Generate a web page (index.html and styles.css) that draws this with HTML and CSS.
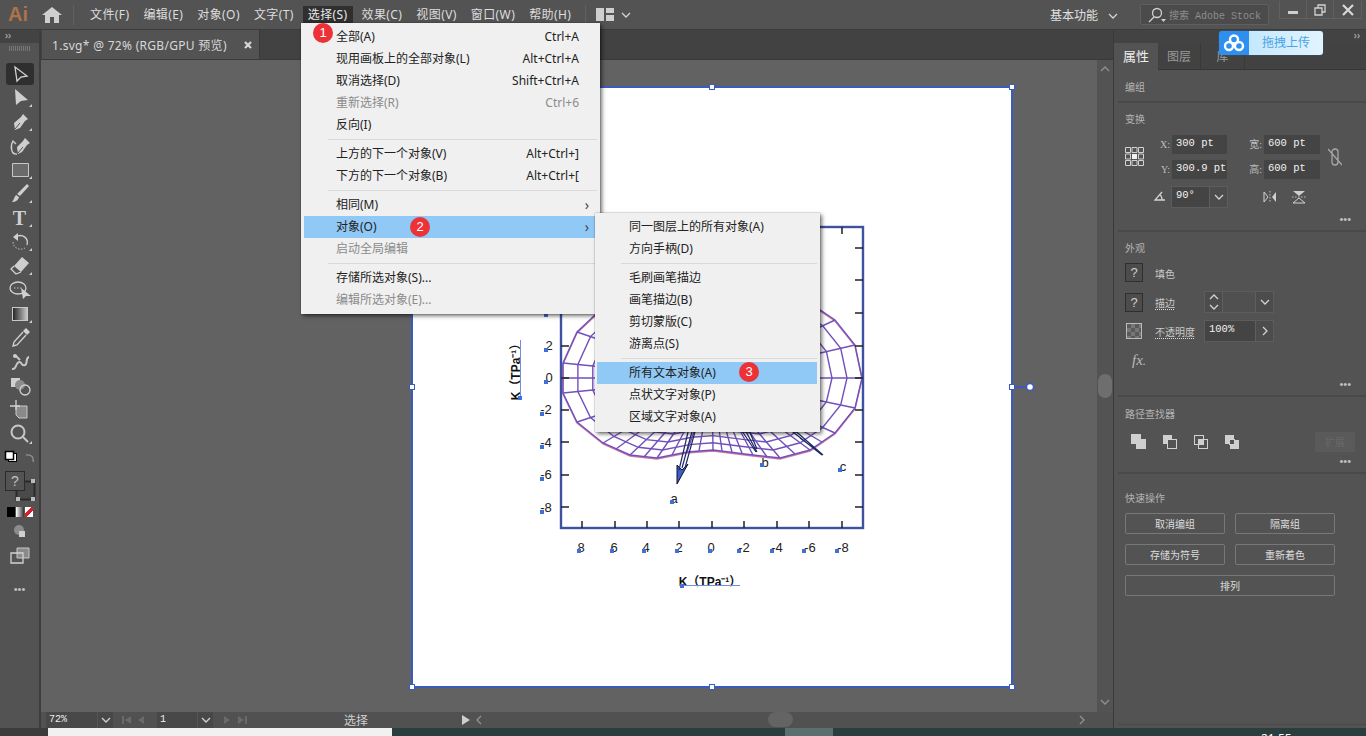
FILE: index.html
```html
<!DOCTYPE html>
<html lang="zh-CN">
<head>
    <meta charset="UTF-8">
    <title>1.svg @ 72% (RGB/GPU 预览)</title>
    <link rel="stylesheet" href="styles.css">
</head>
<body>
<div class="app">
    <!-- top menu bar -->
    <header class="menubar">
        <span class="logo">Ai</span>
        <svg class="home" width="20" height="16" viewBox="0 0 20 16"><path class="fill-light" d="M10 0 L20 8 L17 8 L17 16 L12 16 L12 10 L8 10 L8 16 L3 16 L3 8 L0 8 Z"/></svg>
        <span class="bar-sep"></span>
        <nav class="menu-items">
            <span class="menu-item">文件(F)</span>
            <span class="menu-item">编辑(E)</span>
            <span class="menu-item">对象(O)</span>
            <span class="menu-item">文字(T)</span>
            <span class="menu-item active">选择(S)</span>
            <span class="menu-item">效果(C)</span>
            <span class="menu-item">视图(V)</span>
            <span class="menu-item">窗口(W)</span>
            <span class="menu-item">帮助(H)</span>
        </nav>
        <span class="bar-sep layout-sep"></span>
        <svg class="layout-icon" width="18" height="13" viewBox="0 0 18 13"><path class="fill-light" d="M0 0H8V13H0Z M10 0H18V5H10Z M10 7H18V13H10Z"/></svg>
        <svg class="chev" width="10" height="8" viewBox="0 0 10 8"><path class="line-light" d="M1 2 L5 6 L9 2"/></svg>

        <div class="bar-right">
            <span class="workspace-name">基本功能</span>
            <svg class="chev workspace-chev" width="10" height="8" viewBox="0 0 10 8"><path class="line-light" d="M1 2 L5 6 L9 2"/></svg>
            <div class="search">
                <svg width="18" height="16" viewBox="0 0 18 16"><circle class="line-light" cx="9" cy="6" r="4.5"/><path class="line-light" d="M6 10 L1 15"/><path class="fill-light" d="M13 12H18L15.500 15Z"/></svg>
                <span class="search-text">搜索 Adobe Stock</span>
            </div>
            <div class="win-btns">
                <span class="win-btn"><svg width="12" height="12" viewBox="0 0 12 12"><path class="fill-light" d="M1 7H11V10H1Z"/></svg></span>
                <span class="win-btn"><svg width="12" height="12" viewBox="0 0 12 12"><path class="line-light" d="M1 4H8V11H1Z M4 4V1H11V8H8"/></svg></span>
                <span class="win-btn"><svg width="12" height="12" viewBox="0 0 12 12"><path class="line-bold" d="M1 1 L11 11 M11 1 L1 11"/></svg></span>
            </div>
        </div>
    </header>

    <div class="workspace">
        <!-- left tools -->
        <aside class="toolbar">
            <div class="tool-head">››</div>
            <div class="tool-grip"></div>
            <div class="tool selected"><svg width="24" height="24" viewBox="0 0 24 24"><path class="line-light" d="M7 5 L19 14 L13 15 L9 19 Z"/></svg></div>
            <div class="tool"><svg width="24" height="24" viewBox="0 0 24 24"><path class="fill-light" d="M7 3 L20 14 L13 15 L8 19 Z"/><path class="fill-light" d="M24 18V21H21Z"/></svg></div>
            <div class="tool"><svg width="24" height="24" viewBox="0 0 24 24"><path class="fill-light" d="M7 20 L6 13 L13 7 L15 4 L20 9 L17 11 L12 18 Z"/><path class="slit" d="M7 19 L12 13"/><path class="fill-light" d="M24 18V21H21Z"/></svg></div>
            <div class="tool"><svg width="24" height="24" viewBox="0 0 24 24"><path class="fill-light" d="M10 20 L9 13 L15 7 L17 4 L22 9 L19 11 L14 18 Z"/><path class="slit" d="M10 19 L15 13"/><path class="line-light" d="M9 20 C3 21 2 12 5 7 L8 10"/></svg></div>
            <div class="tool"><svg width="24" height="24" viewBox="0 0 24 24"><path class="box-line" d="M4.500 5.500H20.500V18.500H4.500Z"/><path class="fill-light" d="M24 18V21H21Z"/></svg></div>
            <div class="tool"><svg width="24" height="24" viewBox="0 0 24 24"><path class="fill-light" d="M19 2 L21 4 L12 14 L9 12 Z M8 13 L11 15 C10 19 7 20 4 20 C6 18 6 15 8 13 Z"/><path class="fill-light" d="M24 18V21H21Z"/></svg></div>
            <div class="tool"><span class="tool-t">T</span><svg class="tool-corner" width="24" height="24" viewBox="0 0 24 24"><path class="fill-light" d="M24 18V21H21Z"/></svg></div>
            <div class="tool"><svg width="24" height="24" viewBox="0 0 24 24"><path class="line-light" d="M8 7 C14 3 21 8 19 15"/><path class="fill-light" d="M10 3 V11 L5 7 Z"/><path class="line-dash" d="M5 12 C5 18 12 21 17 18"/><path class="fill-light" d="M24 18V21H21Z"/></svg></div>
            <div class="tool"><svg width="24" height="24" viewBox="0 0 24 24"><path class="fill-light" d="M14 3 L21 9 L13 18 L6 12 Z"/><path class="line-light" d="M6 12 L3 15 L8 20 L13 18"/><path class="fill-light" d="M24 18V21H21Z"/></svg></div>
            <div class="tool"><svg width="24" height="24" viewBox="0 0 24 24"><ellipse class="line-light" cx="10" cy="10" rx="8" ry="6"/><path class="line-dash" d="M6 10H15"/><path class="fill-light" d="M13 10 L23 18 L18 18 L15 21 Z"/></svg></div>
            <div class="tool"><svg width="24" height="24" viewBox="0 0 24 24"><defs><linearGradient id="toolGrad"><stop offset="0" stop-color="#222"/><stop offset="1" stop-color="#ccc"/></linearGradient></defs><rect class="grad-box" x="4.500" y="5.500" width="15" height="13"/><path class="fill-light" d="M24 18V21H21Z"/></svg></div>
            <div class="tool"><svg width="24" height="24" viewBox="0 0 24 24"><path class="fill-light" d="M15 5 L18 2 L22 6 L19 9 Z"/><path class="line-light" d="M15 6 L6 16 L5 20 L9 19 L18 9"/></svg></div>
            <div class="tool"><svg width="24" height="24" viewBox="0 0 24 24"><path class="line-thick" d="M4 19 C9 20 7 13 11 12 C14 11 13 17 17 15 C20 14 17 8 21 7 M8 6 L12 10"/><circle class="fill-light" cx="7" cy="6" r="2"/></svg></div>
            <div class="tool"><svg width="24" height="24" viewBox="0 0 24 24"><rect class="fill-light" x="3" y="4" width="9" height="9"/><circle class="fill-mid" cx="12" cy="11" r="5"/><circle class="line-light" cx="17" cy="16" r="5"/></svg></div>
            <div class="tool"><svg width="24" height="24" viewBox="0 0 24 24"><path class="box-fill" d="M8 8H19V20H11L8 17Z"/><path class="line-light" d="M8 2V12 M2 8H12"/></svg></div>
            <div class="tool"><svg width="24" height="24" viewBox="0 0 24 24"><circle class="line-thick" cx="10" cy="10" r="6.500"/><path class="line-thick" d="M15 15 L20 20"/><path class="fill-light" d="M24 19V22H21Z"/></svg></div>
            <svg class="swatches" width="40" height="60" viewBox="0 0 40 60">
                <rect class="sw-white" x="8.500" y="3.500" width="8" height="8"/>
                <rect class="sw-black" x="5.500" y="1.500" width="8" height="8"/>
                <path class="line-dim" d="M26 5 C32 4 34 8 33 12"/>
                <rect class="sw-stroke" x="16.500" y="31.500" width="18" height="18"/>
                <rect class="sw-dot" x="31" y="29" width="4" height="4"/>
                <rect class="sw-dot" x="31" y="47" width="4" height="4"/>
                <rect class="sw-dot" x="16" y="47" width="4" height="4"/>
                <rect class="sw-box" x="5.500" y="21.500" width="19" height="19"/>
                <text class="sw-q" x="15" y="36">?</text>
            </svg>
            <div class="color-row">
                <span class="chip chip-black"></span>
                <span class="chip chip-grad"></span>
                <span class="chip chip-none"></span>
            </div>
            <div class="tool tool-small"><svg width="16" height="16" viewBox="0 0 16 16"><circle class="fill-mid" cx="7" cy="7" r="5"/><rect class="fill-light" x="7" y="8" width="6" height="6"/></svg></div>
            <div class="tool tool-screen"><svg width="20" height="18" viewBox="0 0 20 18"><path class="box-fill" d="M7 1H19V11H7Z"/><path class="line-light" d="M1 6H13V16H1Z"/></svg></div>
            <div class="dots tool-dots">•••</div>
        </aside>

        <!-- document -->
        <main class="doc">
            <div class="tabs">
                <div class="tab">
                    <span class="tab-name">1.svg* @ 72% (RGB/GPU 预览)</span>
                    <svg width="8" height="8" viewBox="0 0 8 8"><path class="line-bold" d="M1 1 L7 7 M7 1 L1 7"/></svg>
                </div>
            </div>
            <div class="canvas-row">
                <div class="canvas">
                    <div class="artboard">
                        <svg class="chart" width="600" height="600" viewBox="412 87 600 600">
                            <defs>
                                <polygon id="ring" class="ring" points="150,0 143,30 123,55 98,72 68,80 41,77 1,72 -25,74 -55,80 -82,77 -109,65 -135,44 -149,15 -149,-15 -135,-46 -117,-63 -90,-80 -50,-90 0,-95 50,-90 108,-68 123,-58 143,-33"/>
                                <path id="spokes" class="ring" d="M0 0L150 0M0 0L143 30M0 0L123 55M0 0L110 64M0 0L98 72M0 0L83 76M0 0L68 80M0 0L55 79M0 0L41 77M0 0L30 75M0 0L20 74M0 0L10 73M0 0L1 72M0 0L-13 73M0 0L-25 74M0 0L-40 77M0 0L-55 80M0 0L-68 79M0 0L-82 77M0 0L-96 71M0 0L-109 65M0 0L-135 44M0 0L-149 15M0 0L-149 0M0 0L-149 -15M0 0L-135 -46M0 0L-117 -63M0 0L108 -68M0 0L123 -58M0 0L143 -33"/>
                            </defs>
                            <g transform="translate(712 378)" class="mesh">
                                <use href="#ring" class="mesh-pink" y="1"/>
                                <use href="#spokes"/>
                                <use href="#ring"/>
                                <use href="#ring" transform="scale(.9)"/>
                                <use href="#ring" transform="scale(.8)"/>
                                <use href="#ring" transform="scale(.7)"/>
                            </g>

                            <rect class="frame" x="561" y="227" width="302" height="301"/>
                            <path class="ticks" d="M582 227v7M615 227v7M647 227v7M679 227v7M712 227v7M744 227v7M777 227v7M809 227v7M842 227v7
                                M582 528v-7M615 528v-7M647 528v-7M679 528v-7M712 528v-7M744 528v-7M777 528v-7M809 528v-7M842 528v-7
                                M863 248h-8M863 280h-8M863 313h-8M863 346h-8M863 378h-8M863 410h-8M863 442h-8M863 475h-8M863 507h-8
                                M561 346h8M561 378h8M561 410h8M561 442h8M561 475h8M561 507h8"/>

                            <!-- arrows -->
                            <path class="arrow-head" d="M677 484 L677 465 L682 470 L688 464 Z"/>
                            <path class="arrow-shaft" d="M693 428 L682 468 M696 428 L685 468 M689 428 L679 470"/>
                            <path class="arrow-shaft" d="M740 428 L756 452 M744 428 L757 452 M748 428 L757 449"/>
                            <path class="arrow-shaft" d="M788 428 L822 455 M792 428 L823 455 M800 438 L823 455"/>

                            <g class="labels">
                                <text x="581" y="552">8</text><text x="614" y="552">6</text><text x="646" y="552">4</text>
                                <text x="679" y="552">2</text><text x="711" y="552">0</text><text x="744" y="552">-2</text>
                                <text x="777" y="552">-4</text><text x="810" y="552">-6</text><text x="843" y="552">-8</text>
                                <text x="549" y="350">2</text><text x="549" y="382">0</text><text x="546" y="414">-2</text>
                                <text x="546" y="447">-4</text><text x="546" y="479">-6</text><text x="546" y="512">-8</text>
                                <text x="674" y="503">a</text><text x="765" y="467">b</text><text x="843" y="471">c</text>
                            </g>
                            <text class="axis-title" x="710" y="586">K（TPa⁻¹）</text>
                            <text class="axis-title" transform="translate(520 369) rotate(-90)">K（TPa⁻¹）</text>

                            <!-- text selection baselines and anchors -->
                            <path class="baseline" d="M682 585.500H740 M520.500 340V398"/>
                            <g class="anchors">
                                <rect x="680" y="584" width="4" height="4"/><rect x="518" y="396" width="4" height="4"/>
                                <rect x="577" y="549" width="4" height="4"/><rect x="610" y="549" width="4" height="4"/>
                                <rect x="642" y="549" width="4" height="4"/><rect x="675" y="549" width="4" height="4"/>
                                <rect x="708" y="549" width="4" height="4"/><rect x="737" y="549" width="4" height="4"/>
                                <rect x="770" y="549" width="4" height="4"/><rect x="802" y="549" width="4" height="4"/>
                                <rect x="835" y="549" width="4" height="4"/>
                                <rect x="544" y="313" width="4" height="4"/><rect x="544" y="348" width="4" height="4"/>
                                <rect x="544" y="380" width="4" height="4"/><rect x="540" y="412" width="4" height="4"/>
                                <rect x="540" y="445" width="4" height="4"/><rect x="540" y="477" width="4" height="4"/>
                                <rect x="540" y="510" width="4" height="4"/>
                                <rect x="670" y="500" width="4" height="4"/><rect x="760" y="463" width="4" height="4"/>
                                <rect x="838" y="468" width="4" height="4"/>
                            </g>

                            <!-- bounding box -->
                            <rect class="bounds" x="412" y="87" width="600" height="600"/>
                            <path class="bounds" d="M1012 387H1026"/>
                            <circle class="rotate-handle" cx="1030" cy="387" r="3.500"/>
                            <g class="handles">
                                <rect x="409.500" y="84.500" width="5" height="5"/><rect x="709.500" y="84.500" width="5" height="5"/>
                                <rect x="1009.500" y="84.500" width="5" height="5"/><rect x="409.500" y="384.500" width="5" height="5"/>
                                <rect x="1009.500" y="384.500" width="5" height="5"/><rect x="409.500" y="684.500" width="5" height="5"/>
                                <rect x="709.500" y="684.500" width="5" height="5"/><rect x="1009.500" y="684.500" width="5" height="5"/>
                            </g>
                        </svg>
                    </div>
                </div>
                <div class="vscroll">
                    <svg width="10" height="8" viewBox="0 0 10 8"><path class="line-dim" d="M1 6 L5 2 L9 6"/></svg>
                    <span class="vthumb"></span>
                    <svg width="10" height="8" viewBox="0 0 10 8"><path class="line-dim" d="M1 2 L5 6 L9 2"/></svg>
                </div>
            </div>
            <div class="statusbar">
                <span class="st-field st-zoom">72%</span>
                <span class="st-chev"><svg width="10" height="8" viewBox="0 0 10 8"><path class="line-light" d="M1 2 L5 6 L9 2"/></svg></span>
                <span class="st-nav"><svg width="30" height="10" viewBox="0 0 30 10"><path class="fill-nav" d="M2 1H4V9H2Z M11 1V9L5 5Z M24 1V9L18 5Z"/></svg></span>
                <span class="st-field st-page">1</span>
                <span class="st-chev"><svg width="10" height="8" viewBox="0 0 10 8"><path class="line-light" d="M1 2 L5 6 L9 2"/></svg></span>
                <span class="st-nav"><svg width="30" height="10" viewBox="0 0 30 10"><path class="fill-nav" d="M4 1V9L10 5Z M18 1V9L24 5Z M25 1H27V9H25Z"/></svg></span>
                <span class="st-label">选择</span>
                <svg class="st-play" width="8" height="10" viewBox="0 0 8 10"><path class="fill-light" d="M0 0V10L8 5Z"/></svg>
                <svg class="st-left" width="6" height="10" viewBox="0 0 6 10"><path class="line-dim" d="M5 1 L1 5 L5 9"/></svg>
                <div class="st-track"><span class="st-thumb"></span></div>
                <svg class="st-right" width="6" height="10" viewBox="0 0 6 10"><path class="line-dim" d="M1 1 L5 5 L1 9"/></svg>
            </div>
        </main>

        <!-- properties panel -->
        <aside class="panel">
            <div class="panel-head">››</div>
            <div class="panel-tabs">
                <span class="ptab on">属性</span>
                <span class="ptab">图层</span>
                <span class="ptab">库</span>
            </div>
            <section class="sec sec-group"><h3>编组</h3></section>
            <section class="sec sec-transform">
                <h3>变换</h3>
                <div class="tf-grid">
                    <svg class="tf-ref" width="19" height="19" viewBox="0 0 19 19"><path class="line-thin" d="M.5 .5h5v5h-5z M7 .5h5v5h-5z M13.500 .5h5v5h-5z M.5 7h5v5h-5z M13.500 7h5v5h-5z M.5 13.500h5v5h-5z M7 13.500h5v5h-5z M13.500 13.500h5v5h-5z"/><rect class="fill-white" x="7" y="7" width="5" height="5"/></svg>
                    <span class="tf-label tf-x">X:</span><span class="field tf-f1">300 pt</span>
                    <span class="tf-label tf-w">宽:</span><span class="field tf-f2">600 pt</span>
                    <svg class="tf-link" width="14" height="18" viewBox="0 0 14 18"><path class="link-line" d="M4 4 C4 0 10 0 10 4 V14 C10 18 4 18 4 14 Z M0 1 L14 17"/></svg>
                    <span class="tf-label tf-y">Y:</span><span class="field tf-f3">300.9 pt</span>
                    <span class="tf-label tf-h">高:</span><span class="field tf-f4">600 pt</span>
                    <svg class="tf-angle" width="12" height="10" viewBox="0 0 12 10"><path class="line-light" d="M11 9H1L8 1 M6 4 C8 5 8 7 8 9"/></svg>
                    <div class="combo tf-combo"><span class="field combo-val">90°</span><span class="combo-btn"><svg width="10" height="8" viewBox="0 0 10 8"><path class="line-light" d="M1 2 L5 6 L9 2"/></svg></span></div>
                    <div class="tf-flips">
                        <svg width="14" height="12" viewBox="0 0 14 12"><path class="line-thin" d="M1 1V11L5 6Z"/><path class="fill-light" d="M13 1V11L9 6Z"/><path class="line-dash" d="M7 0V12"/></svg>
                        <svg width="14" height="14" viewBox="0 0 14 14"><path class="fill-light" d="M1 1H13L7 6Z"/><path class="line-thin" d="M1 13H13L7 8Z"/><path class="line-dash" d="M0 7H14"/></svg>
                    </div>
                </div>
                <div class="dots sec-dots">•••</div>
            </section>
            <section class="sec sec-look">
                <h3>外观</h3>
                <div class="look-row look-fill"><span class="q-box">?</span><span class="look-name">填色</span></div>
                <div class="look-row look-stroke">
                    <span class="q-box">?</span><span class="look-name dotted">描边</span>
                    <div class="combo look-combo">
                        <span class="spin"><svg width="10" height="16" viewBox="0 0 10 16"><path class="line-light" d="M1 5 L5 1 L9 5 M1 11 L5 15 L9 11"/></svg></span>
                        <span class="combo-mid"></span>
                        <span class="combo-btn"><svg width="10" height="8" viewBox="0 0 10 8"><path class="line-light" d="M1 2 L5 6 L9 2"/></svg></span>
                    </div>
                </div>
                <div class="look-row look-opacity">
                    <span class="checker"></span><span class="look-name dotted wide">不透明度</span>
                    <div class="combo look-combo">
                        <span class="field combo-val">100%</span>
                        <span class="combo-btn"><svg width="8" height="10" viewBox="0 0 8 10"><path class="line-light" d="M2 1 L6 5 L2 9"/></svg></span>
                    </div>
                </div>
                <div class="fx">fx<small>.</small></div>
                <div class="dots sec-dots">•••</div>
            </section>
            <section class="sec sec-path">
                <h3>路径查找器</h3>
                <div class="path-row">
                    <svg width="16" height="16" viewBox="0 0 16 16"><rect class="fill-light" x="0" y="0" width="10" height="10"/><rect class="fill-light" x="5" y="5" width="10" height="10"/></svg>
                    <svg width="16" height="16" viewBox="0 0 16 16"><rect class="fill-light" x="1" y="1" width="9" height="9"/><rect class="box-panel" x="5.500" y="5.500" width="9" height="9"/></svg>
                    <svg width="16" height="16" viewBox="0 0 16 16"><rect class="line-thin" x="1.500" y="1.500" width="9" height="9"/><rect class="line-thin" x="5.500" y="5.500" width="9" height="9"/><rect class="fill-light" x="6" y="6" width="4" height="4"/></svg>
                    <svg width="16" height="16" viewBox="0 0 16 16"><path class="fill-light" d="M1 1H10V5H5V10H1Z M6 11H11V6H15V15H6Z"/><rect class="line-thin" x="5.500" y="5.500" width="5" height="5"/></svg>
                    <span class="expand">扩展</span>
                </div>
                <div class="dots sec-dots">•••</div>
            </section>
            <section class="sec sec-quick">
                <h3>快速操作</h3>
                <div class="quick-grid">
                    <button class="q-btn">取消编组</button>
                    <button class="q-btn">隔离组</button>
                    <button class="q-btn">存储为符号</button>
                    <button class="q-btn">重新着色</button>
                    <button class="q-btn q-wide">排列</button>
                </div>
            </section>
        </aside>
    </div>

    <footer class="taskbar">
        <span class="task-dark"></span>
        <span class="task-window"></span>
        <span class="task-active"></span>
        <span class="task-clock">21:55</span>
    </footer>

    <!-- open menus -->
    <div class="menu menu-main">
        <div class="mi"><span>全部(A)</span><span>Ctrl+A</span></div>
        <div class="mi"><span>现用画板上的全部对象(L)</span><span>Alt+Ctrl+A</span></div>
        <div class="mi"><span>取消选择(D)</span><span>Shift+Ctrl+A</span></div>
        <div class="mi off"><span>重新选择(R)</span><span>Ctrl+6</span></div>
        <div class="mi"><span>反向(I)</span></div>
        <div class="msep"></div>
        <div class="mi"><span>上方的下一个对象(V)</span><span>Alt+Ctrl+]</span></div>
        <div class="mi"><span>下方的下一个对象(B)</span><span>Alt+Ctrl+[</span></div>
        <div class="msep"></div>
        <div class="mi"><span>相同(M)</span><span class="sub-arrow">›</span></div>
        <div class="mi hot"><span>对象(O)</span><span class="sub-arrow">›</span></div>
        <div class="mi off"><span>启动全局编辑</span></div>
        <div class="msep"></div>
        <div class="mi"><span>存储所选对象(S)...</span></div>
        <div class="mi off"><span>编辑所选对象(E)...</span></div>
        <span class="badge badge-1">1</span>
        <span class="badge badge-2">2</span>
    </div>
    <div class="menu menu-sub">
        <div class="mi"><span>同一图层上的所有对象(A)</span></div>
        <div class="mi"><span>方向手柄(D)</span></div>
        <div class="msep"></div>
        <div class="mi"><span>毛刷画笔描边</span></div>
        <div class="mi"><span>画笔描边(B)</span></div>
        <div class="mi"><span>剪切蒙版(C)</span></div>
        <div class="mi"><span>游离点(S)</span></div>
        <div class="msep"></div>
        <div class="mi hot"><span>所有文本对象(A)</span></div>
        <div class="mi"><span>点状文字对象(P)</span></div>
        <div class="mi"><span>区域文字对象(A)</span></div>
        <span class="badge badge-3">3</span>
    </div>

    <!-- floating upload widget -->
    <div class="upload">
        <span class="upload-icon"><svg width="22" height="18" viewBox="0 0 22 18"><g class="cloud"><circle cx="11" cy="5.500" r="4"/><circle cx="6" cy="12" r="4"/><circle cx="16" cy="12" r="4"/></g></svg></span>
        <span class="upload-text">拖拽上传</span>
    </div>
</div>
</body>
</html>
```

FILE: styles.css
```css
* {
    box-sizing: border-box;
}

html, body {
    margin: 0;
    height: 100%;
    overflow: hidden;
}

body {
    font-family: "Noto Sans", "Noto Sans CJK SC", sans-serif;
    font-size: 12px;
    color: #ddd;
    background: #535353;
}

.app {
    position: relative;
    width: 1366px;
    height: 736px;
    display: flex;
    flex-direction: column;
    overflow: hidden;
}

/* svg helpers */
.fill-light { fill: #cfcfcf; }
.fill-white { fill: #f2f2f2; }
.fill-mid { fill: #8c8c8c; }
.fill-nav { fill: #6a6a6a; }
.line-light { fill: none; stroke: #d2d2d2; stroke-width: 1.3; }
.line-bold { fill: none; stroke: #d8d8d8; stroke-width: 2.2; }
.line-thin { fill: none; stroke: #d2d2d2; stroke-width: 1; }
.line-thick { fill: none; stroke: #c8c8c8; stroke-width: 2; }
.line-dim { fill: none; stroke: #8f8f8f; stroke-width: 1.4; }
.line-dash { fill: none; stroke: #c0c0c0; stroke-width: 1; stroke-dasharray: 1.500 1.500; }
.link-line { fill: none; stroke: #a8a8a8; stroke-width: 1.3; }
.slit { fill: none; stroke: #535353; stroke-width: 1; }
.box-line { fill: #6b6b6b; stroke: #c8c8c8; stroke-width: 1; }
.box-fill { fill: #8a8a8a; stroke: #c8c8c8; stroke-width: 1; }
.box-panel { fill: #535353; stroke: #d2d2d2; stroke-width: 1; }
.grad-box { fill: url(#toolGrad); stroke: #c8c8c8; stroke-width: 1; }

/* menu bar */
.menubar {
    height: 30px;
    flex: none;
    display: flex;
    align-items: center;
    padding-left: 8px;
    background: #535353;
    border-bottom: 1px solid #3c3c3c;
}

.logo {
    width: 34px;
    font-family: "Liberation Sans", sans-serif;
    font-size: 20px;
    font-weight: bold;
    color: #ad7346;
}

.home {
    margin-right: 11px;
}

.bar-sep {
    width: 1px;
    height: 20px;
    background: #626262;
}

.menu-items {
    display: flex;
    gap: 4px;
    margin-left: 11px;
}

.menu-item {
    padding: 0 5px;
    height: 18px;
    line-height: 18px;
    letter-spacing: .4px;
    white-space: nowrap;
}

.menu-item.active {
    background: #2f2f2f;
    color: #e8e8e8;
}

.layout-sep {
    margin-left: 9px;
}

.layout-icon {
    margin-left: 10px;
}

.chev {
    margin-left: 7px;
}

.bar-right {
    margin-left: auto;
    display: flex;
    align-items: center;
}

.workspace-name {
    font-size: 12px;
    color: #e0e0e0;
}

.workspace-chev {
    margin: 2px 0 0 10px;
}

.search {
    width: 129px;
    height: 21px;
    margin-left: 22px;
    padding-left: 7px;
    display: flex;
    align-items: center;
    gap: 3px;
    background: #4b4b4b;
    border: 1px solid #5f5f5f;
    border-radius: 2px;
}

.search-text {
    font-family: "Liberation Mono", "Noto Sans CJK SC", monospace;
    font-size: 10px;
    color: #8d8d8d;
    white-space: nowrap;
}

.win-btns {
    display: flex;
    margin: 0 4px 0 10px;
    height: 18px;
    margin-top: -9px;
    border: 1px solid #606060;
    border-top: 0;
}

.win-btn {
    width: 27px;
    display: flex;
    align-items: center;
    justify-content: center;
    border-right: 1px solid #606060;
}

.win-btn:last-child {
    border-right: 0;
}

/* main area */
.workspace {
    flex: 1;
    min-height: 0;
    display: flex;
}

.toolbar {
    width: 41px;
    flex: none;
    display: flex;
    flex-direction: column;
    align-items: center;
    background: #535353;
    border-right: 2px solid #3d3d3d;
}

.tool-head {
    width: 100%;
    height: 13px;
    padding-left: 5px;
    font-size: 10px;
    line-height: 11px;
    color: #bbb;
    background: #434343;
}

.tool-grip {
    width: 22px;
    height: 19px;
    margin-top: 0;
    background: repeating-linear-gradient(90deg, #777 0 1px, transparent 1px 2px) center 3px / 22px 5px no-repeat;
}

.tool {
    position: relative;
    width: 28px;
    height: 24px;
    flex: none;
    display: flex;
    align-items: center;
    justify-content: center;
}

.tool.selected {
    height: 22px;
    margin: 1px 0;
    background: #2f2f2f;
    border-radius: 3px;
}

.tool-t {
    font-family: "Liberation Serif", serif;
    font-size: 20px;
    font-weight: bold;
    color: #cfcfcf;
    line-height: 24px;
}

.tool-corner {
    position: absolute;
    left: 2px;
    top: 0;
}

.swatches {
    flex: none;
    margin-top: 4px;
}

.sw-white { fill: #fff; stroke: #000; }
.sw-black { fill: #fff; stroke: #000; stroke-width: 1.500; }
.sw-box { fill: #535353; stroke: #2b2b2b; }
.sw-stroke { fill: #4a4a4a; stroke: #2b2b2b; stroke-width: 2; }
.sw-dot { fill: #bbb; }
.sw-q {
    font-family: "Liberation Sans", sans-serif;
    font-size: 14px;
    fill: #c0c0c0;
    text-anchor: middle;
}

.color-row {
    display: flex;
    gap: 1px;
    margin-top: -3px;
}

.chip {
    width: 8px;
    height: 10px;
}

.chip-black { background: #000; }
.chip-grad { background: linear-gradient(90deg, #fff, #333); }
.chip-none {
    background: linear-gradient(135deg, #fff 38%, #d7202a 38% 62%, #fff 62%);
}

.tool-small {
    height: 16px;
    margin-top: 6px;
}

.tool-screen {
    height: 20px;
    margin-top: 7px;
}

.dots {
    font-size: 11px;
    color: #c0c0c0;
    line-height: 10px;
    font-family: "Liberation Sans", sans-serif;
}

.tool-dots {
    margin-top: 18px;
}

/* document */
.doc {
    flex: 1;
    min-width: 0;
    display: flex;
    flex-direction: column;
}

.tabs {
    height: 30px;
    flex: none;
    display: flex;
    background: #424242;
    border-bottom: 1px solid #3a3a3a;
}

.tab {
    width: 218px;
    margin-left: 1px;
    padding: 0 7px 0 10px;
    display: flex;
    align-items: center;
    justify-content: space-between;
    background: #535353;
    border-right: 1px solid #3a3a3a;
    white-space: nowrap;
    color: #d8d8d8;
}

.tab-name {
    letter-spacing: .3px;
}

.canvas-row {
    flex: 1;
    min-height: 0;
    display: flex;
}

.canvas {
    position: relative;
    flex: 1;
    background: #626262;
}

/* the artboard sits freely on the canvas */
.artboard {
    position: absolute;
    left: 371px;
    top: 27px;
    width: 600px;
    height: 600px;
    background: #fff;
}

.chart {
    position: absolute;
    left: 0;
    top: 0;
    overflow: visible;
}

.ring {
    fill: none;
    vector-effect: non-scaling-stroke;
}

.mesh {
    stroke: #7250bc;
    stroke-width: 1.400;
}

.mesh-pink {
    stroke: #d07aa0;
}

.frame {
    fill: none;
    stroke: #3f529f;
    stroke-width: 2.400;
}

.ticks {
    fill: none;
    stroke: #222;
    stroke-width: 1.500;
}

.arrow-shaft {
    fill: none;
    stroke: #1d2a66;
    stroke-width: 1.200;
}

.arrow-head {
    fill: #3d5cc4;
    stroke: #0d1230;
    stroke-width: 1;
}

.labels text {
    font-family: "Liberation Sans", sans-serif;
    font-size: 13px;
    fill: #222;
    text-anchor: middle;
}

.axis-title {
    font-family: "Liberation Sans", "Noto Sans CJK SC", sans-serif;
    font-size: 12px;
    font-weight: bold;
    fill: #111;
    text-anchor: middle;
}

.baseline {
    fill: none;
    stroke: #6d8fe0;
    stroke-width: 1;
}

.anchors {
    fill: #3f6fd8;
}

.bounds {
    fill: none;
    stroke: #3a5cc0;
    stroke-width: 2;
}

.rotate-handle {
    fill: #fff;
    stroke: #3a5cc0;
    stroke-width: 1.500;
}

.handles {
    fill: #fff;
    stroke: #3a5cc0;
    stroke-width: 1;
}

.vscroll {
    width: 16px;
    flex: none;
    padding: 5px 0 6px;
    display: flex;
    flex-direction: column;
    align-items: center;
    justify-content: space-between;
    background: #535353;
}

.vthumb {
    width: 14px;
    height: 24px;
    background: #6e6e6e;
    border-radius: 7px;
    margin-top: 1px;
}

.statusbar {
    height: 16px;
    flex: none;
    padding-left: 5px;
    display: flex;
    align-items: center;
    background: #515151;
    font-size: 11px;
    line-height: 16px;
}

.st-field {
    height: 16px;
    padding-left: 3px;
    background: #484848;
    color: #eee;
    font-family: "Liberation Mono", monospace;
    font-size: 10px;
}

.st-zoom { width: 51px; }
.st-page { width: 40px; padding-left: 3px; }

.st-chev {
    width: 16px;
    height: 16px;
    display: flex;
    align-items: center;
    justify-content: center;
    background: #484848;
    border-left: 1px solid #555;
}

.st-nav {
    width: 44px;
    height: 16px;
    display: flex;
    align-items: center;
    justify-content: center;
}

.st-label {
    width: 198px;
    font-size: 12px;
    text-align: center;
    color: #cfcfcf;
    padding-top: 2px;
}

.st-play {
    margin-left: 7px;
}

.st-left {
    margin-left: 6px;
}

.st-track {
    width: 597px;
    height: 16px;
}

.st-thumb {
    display: block;
    width: 25px;
    height: 15px;
    margin-left: 286px;
    background: #646464;
    border-radius: 8px;
}

/* properties panel */
.panel {
    width: 253px;
    flex: none;
    padding-left: 4px;
    background: #535353;
    border-left: 1px solid #3a3a3a;
    display: flex;
    flex-direction: column;
    position: relative;
}

.panel-head {
    height: 13px;
    margin-left: -4px;
    padding-right: 6px;
    text-align: right;
    font-size: 10px;
    line-height: 11px;
    color: #bbb;
    background: #434343;
}

.panel-tabs {
    height: 27px;
    margin-left: -4px;
    display: flex;
    background: #424242;
    border-bottom: 1px solid #353535;
}

.ptab {
    width: 44px;
    line-height: 27px;
    text-align: center;
    color: #9a9a9a;
    border-right: 1px solid #3a3a3a;
    white-space: nowrap;
}

.ptab.on {
    height: 27px;
    background: #535353;
    color: #eee;
    font-size: 13px;
    border-right: 0;
}

.ptab:nth-child(2) {
    margin-left: 0;
    width: 43px;
}

.sec {
    flex: none;
    padding: 0 0 0 7px;
    position: relative;
    border-bottom: 2px solid #494949;
}

.sec h3 {
    margin: 0;
    font-size: 10px;
    font-weight: normal;
    line-height: 14px;
    color: #b4b4b4;
}

.sec-group { height: 33px; padding-top: 10px; }
.sec-transform { height: 129px; padding-top: 9px; }
.sec-look { height: 165px; padding-top: 9px; }
.sec-path { height: 77px; padding-top: 10px; }
.sec-quick { flex: 1; padding-top: 17px; border-bottom: 1px solid #494949; margin-bottom: 3px; }

.sec-dots {
    position: absolute;
    right: 15px;
    bottom: 6px;
}

.tf-grid {
    display: grid;
    grid-template-columns: 47px 55px 37px 56px 30px;
    grid-template-rows: 19px 19px 20px;
    row-gap: 6px;
    margin-top: 9px;
}

.tf-grid .tf-combo { margin-top: 2px; }

.tf-ref {
    grid-column: 1;
    grid-row: 1 / 3;
    align-self: center;
    margin-top: -1px;
}

.tf-label {
    font-family: "Liberation Serif", "Noto Sans CJK SC", serif;
    font-size: 10px;
    line-height: 19px;
    text-align: right;
    padding-right: 2px;
    color: #bdbdbd;
    white-space: nowrap;
}

.tf-x { grid-column: 1; grid-row: 1; }
.tf-f1 { grid-column: 2; grid-row: 1; }
.tf-w { grid-column: 3; grid-row: 1; }
.tf-f2 { grid-column: 4; grid-row: 1; }
.tf-y { grid-column: 1; grid-row: 2; }
.tf-f3 { grid-column: 2; grid-row: 2; }
.tf-h { grid-column: 3; grid-row: 2; }
.tf-f4 { grid-column: 4; grid-row: 2; }

.tf-link {
    grid-column: 5;
    grid-row: 1 / 3;
    align-self: center;
    justify-self: center;
}

.tf-angle {
    grid-column: 1;
    grid-row: 3;
    justify-self: end;
    align-self: center;
    margin: 2px 6px 0 0;
}

.tf-combo { grid-column: 2; grid-row: 3; }

.tf-flips {
    grid-column: 3 / 5;
    grid-row: 3;
    display: flex;
    align-items: center;
    gap: 15px;
    padding: 4px 0 0 36px;
}

.field {
    display: block;
    height: 19px;
    padding-left: 4px;
    background: #444;
    color: #f2f2f2;
    font-family: "Liberation Mono", monospace;
    font-size: 10.500px;
    line-height: 17px;
    white-space: nowrap;
    overflow: hidden;
}

.combo {
    display: flex;
    height: 20px;
    background: #4c4c4c;
    outline: 1px solid #5c5c5c;
}

.combo-val {
    flex: 1;
    height: 20px;
}

.combo-btn {
    width: 18px;
    display: flex;
    align-items: center;
    justify-content: center;
    border-left: 1px solid #5e5e5e;
}

.look-row {
    display: flex;
    align-items: center;
    height: 20px;
}

.look-fill { margin-top: 8px; height: 19px; }
.look-stroke { margin-top: 10px; }
.look-opacity { margin-top: 9px; }

.q-box {
    width: 18px;
    height: 19px;
    background: #4c4c4c;
    border: 1px solid #2f2f2f;
    font-family: "Liberation Sans", sans-serif;
    font-size: 13px;
    line-height: 17px;
    text-align: center;
    color: #d0d0d0;
}

.look-name {
    width: 50px;
    margin-left: 12px;
    padding-top: 3px;
    font-size: 10px;
    color: #c8c8c8;
    white-space: nowrap;
    line-height: 13px;
}

.dotted {
    text-decoration: underline dotted #ddd;
    text-underline-offset: 2px;
}

.checker {
    width: 16px;
    height: 16px;
    margin: 0 1px;
    border: 1px solid #bbb;
    background: repeating-conic-gradient(#777 0 25%, #5a5a5a 0 50%) 0 0 / 8px 8px;
}

.look-combo {
    width: 68px;
}

.spin {
    width: 18px;
    display: flex;
    align-items: center;
    justify-content: center;
    border-right: 1px solid #5e5e5e;
}

.combo-mid {
    flex: 1;
    background: #505050;
}

.fx {
    margin: 10px 0 0 7px;
    font-family: "Liberation Serif", serif;
    font-style: italic;
    font-size: 15px;
    line-height: 18px;
    color: #bbb;
}

.path-row {
    margin-top: 11px;
    display: flex;
    align-items: center;
    gap: 15px;
    padding-left: 6px;
    height: 20px;
}

.expand {
    width: 40px;
    height: 20px;
    margin-left: 60px;
    background: #5a5a5a;
    color: #686868;
    font-size: 10px;
    line-height: 20px;
    text-align: center;
}

.quick-grid {
    display: grid;
    grid-template-columns: 100px 100px;
    gap: 10px;
    margin-top: 8px;
    width: 210px;
}

.q-btn {
    height: 21px;
    padding: 0;
    font-family: inherit;
    font-size: 10px;
    color: #dcdcdc;
    background: transparent;
    border: 1px solid #787878;
    border-radius: 2px;
}

.q-wide {
    grid-column: 1 / 3;
}

/* taskbar */
.taskbar {
    height: 8px;
    flex: none;
    display: flex;
    background: #2b3e3e;
    overflow: hidden;
}

.task-dark {
    width: 48px;
    background: #3c3c3c;
}

.task-window {
    width: 344px;
    background: #f1f1f1;
}

.task-active {
    width: 48px;
    margin-left: 393px;
    background: #5b6f6e;
}

.task-clock {
    margin-left: 428px;
    padding-top: 4px;
    color: #fff;
    font-size: 12px;
    line-height: 14px;
}

/* dropdown menus lie over the workspace */
.menu {
    position: absolute;
    padding: 3px;
    background: #f0f0f0;
    color: #222;
    box-shadow: 2px 2px 4px rgba(0, 0, 0, .55), 0 0 1px rgba(0, 0, 0, .5);
    z-index: 5;
}

.menu-main {
    left: 301px;
    top: 23px;
    width: 299px;
}

.menu-sub {
    left: 595px;
    top: 213px;
    width: 225px;
    height: 219px;
    padding: 3px 3px 3px 2px;
    z-index: 6;
}

.mi {
    height: 22px;
    padding: 0 18px 2px 32px;
    display: flex;
    align-items: center;
    justify-content: space-between;
    white-space: nowrap;
    font-size: 12px;
}

.mi.off {
    color: #8b8b8b;
}

.mi.hot {
    background: #90c8f6;
}

.sub-arrow {
    margin-right: -10px;
    font-size: 14px;
    color: #444;
}

.msep {
    height: 7px;
    margin-left: 24px;
    background: linear-gradient(#d9d9d9, #d9d9d9) center / 100% 1px no-repeat;
}

.badge {
    position: absolute;
    width: 20px;
    height: 20px;
    border-radius: 50%;
    background: #ec3236;
    color: #fff;
    font-family: "Liberation Sans", sans-serif;
    font-size: 13px;
    line-height: 20px;
    text-align: center;
}

.badge-1 { left: 12px; top: 0; }
.badge-2 { left: 109px; top: 194px; }
.badge-3 { left: 144px; top: 149px; }

/* upload widget */
.upload {
    position: absolute;
    left: 1219px;
    top: 31px;
    width: 104px;
    height: 24px;
    display: flex;
    border-radius: 3px;
    overflow: hidden;
    box-shadow: 0 0 1px #2a7fd0;
    z-index: 4;
}

.upload-icon {
    width: 30px;
    display: flex;
    align-items: center;
    justify-content: center;
    background: #2d8ff0;
}

.cloud circle {
    fill: none;
    stroke: #fff;
    stroke-width: 2.400;
}

.upload-text {
    flex: 1;
    background: linear-gradient(90deg, #c4e8fd, #e2f4ff);
    color: #4aa3e6;
    line-height: 24px;
    text-align: center;
}
```
